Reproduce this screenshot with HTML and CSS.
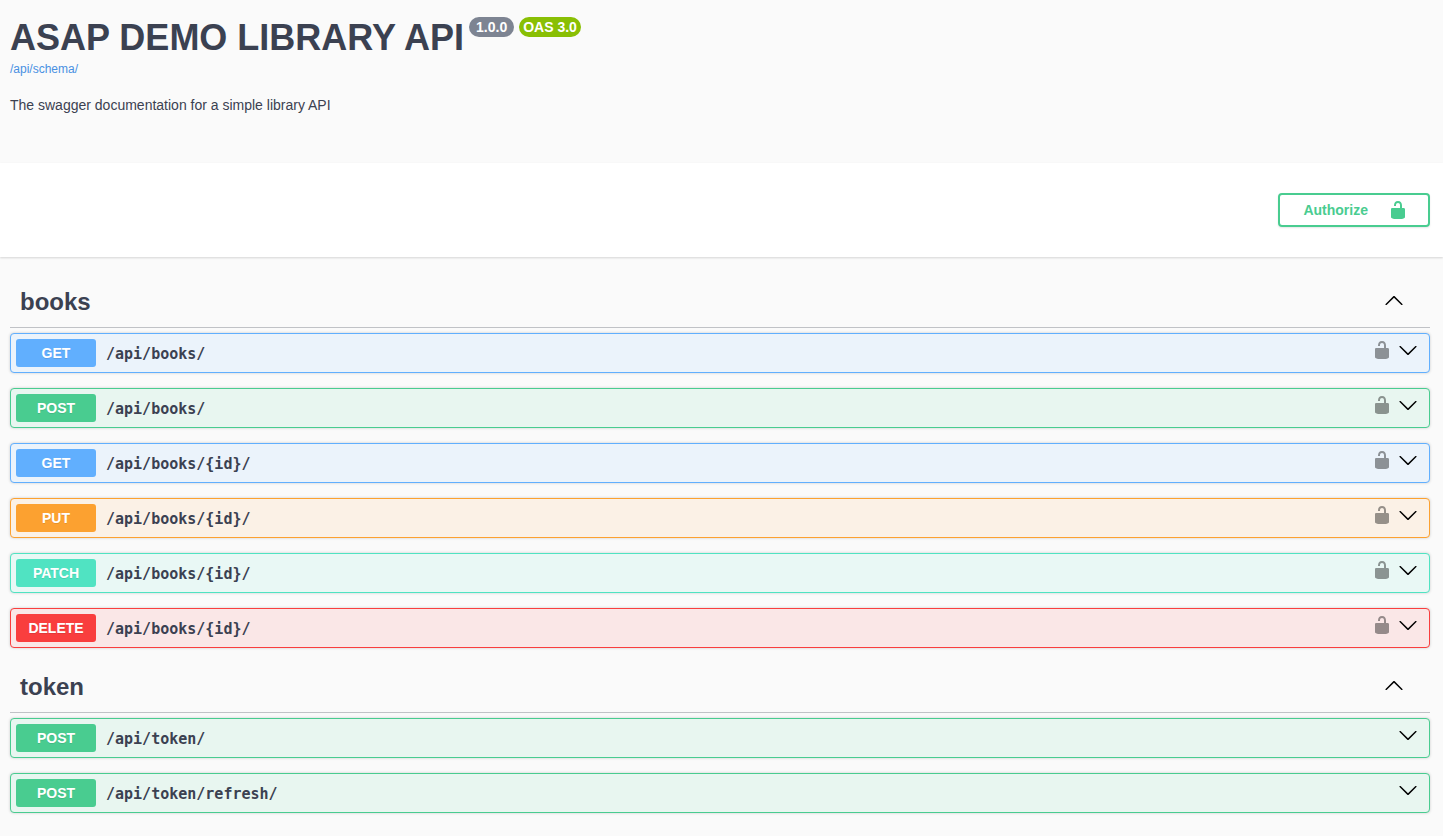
FILE: index.html
```html
<!DOCTYPE html>
<html lang="en">
<head>
<meta charset="utf-8">
<title>ASAP DEMO LIBRARY API</title>
<link rel="stylesheet" href="styles.css">
</head>
<body>
<svg class="sprite" aria-hidden="true">
  <symbol id="unlocked" viewBox="0 0 20 20"><path d="M15.8 8H14V5.6C14 2.703 12.665 1 10 1 7.334 1 6 2.703 6 5.6V6h2v-.801C8 3.754 8.797 3 10 3c1.203 0 2 .754 2 2.199V8H4c-.553 0-1 .646-1 1.199V17c0 .549.428 1.139.951 1.307l1.197.387C5.672 18.861 6.55 19 7.1 19h5.8c.549 0 1.428-.139 1.951-.307l1.196-.387c.524-.167.953-.757.953-1.306V9.199C17 8.646 16.352 8 15.8 8z"/></symbol>
  <symbol id="down" viewBox="0 0 20 20"><path d="M17.418 6.109c.272-.268.709-.268.979 0s.271.701 0 .969l-7.908 7.83c-.27.268-.707.268-.979 0l-7.908-7.83c-.27-.268-.27-.701 0-.969.271-.268.709-.268.979 0L10 13.25l7.418-7.141z"/></symbol>
  <symbol id="up" viewBox="0 0 20 20"><path d="M17.418 14.908c.272.268.709.268.979 0s.271-.701 0-.969l-7.908-7.83c-.27-.268-.707-.268-.979 0l-7.908 7.83c-.27.268-.27.701 0 .969.271.268.709.268.979 0L10 7.767l7.418 7.141z"/></symbol>
</svg>

<header class="info">
  <div class="title-row">
    <h1 class="title">ASAP DEMO LIBRARY API</h1>
    <span class="badge version">1.0.0</span>
    <span class="badge oas">OAS 3.0</span>
  </div>
  <a class="schema-link" href="/api/schema/">/api/schema/</a>
  <p class="description">The swagger documentation for a simple library API</p>
</header>

<section class="auth-bar">
  <button class="authorize" type="button">Authorize<svg class="icon"><use href="#unlocked"/></svg></button>
</section>

<main class="operations">
  <section>
    <div class="tag">
      <h2 class="tag-name">books</h2>
      <button class="icon-button" type="button" aria-label="Collapse books"><svg class="icon"><use href="#up"/></svg></button>
    </div>
    <div class="operation get">
      <span class="method">GET</span><span class="path">/api/books/</span>
      <div class="actions">
        <button class="icon-button lock" type="button" aria-label="Authorization"><svg class="icon"><use href="#unlocked"/></svg></button>
        <button class="icon-button" type="button" aria-label="Expand"><svg class="icon"><use href="#down"/></svg></button>
      </div>
    </div>
    <div class="operation post">
      <span class="method">POST</span><span class="path">/api/books/</span>
      <div class="actions">
        <button class="icon-button lock" type="button" aria-label="Authorization"><svg class="icon"><use href="#unlocked"/></svg></button>
        <button class="icon-button" type="button" aria-label="Expand"><svg class="icon"><use href="#down"/></svg></button>
      </div>
    </div>
    <div class="operation get">
      <span class="method">GET</span><span class="path">/api/books/{id}/</span>
      <div class="actions">
        <button class="icon-button lock" type="button" aria-label="Authorization"><svg class="icon"><use href="#unlocked"/></svg></button>
        <button class="icon-button" type="button" aria-label="Expand"><svg class="icon"><use href="#down"/></svg></button>
      </div>
    </div>
    <div class="operation put">
      <span class="method">PUT</span><span class="path">/api/books/{id}/</span>
      <div class="actions">
        <button class="icon-button lock" type="button" aria-label="Authorization"><svg class="icon"><use href="#unlocked"/></svg></button>
        <button class="icon-button" type="button" aria-label="Expand"><svg class="icon"><use href="#down"/></svg></button>
      </div>
    </div>
    <div class="operation patch">
      <span class="method">PATCH</span><span class="path">/api/books/{id}/</span>
      <div class="actions">
        <button class="icon-button lock" type="button" aria-label="Authorization"><svg class="icon"><use href="#unlocked"/></svg></button>
        <button class="icon-button" type="button" aria-label="Expand"><svg class="icon"><use href="#down"/></svg></button>
      </div>
    </div>
    <div class="operation delete">
      <span class="method">DELETE</span><span class="path">/api/books/{id}/</span>
      <div class="actions">
        <button class="icon-button lock" type="button" aria-label="Authorization"><svg class="icon"><use href="#unlocked"/></svg></button>
        <button class="icon-button" type="button" aria-label="Expand"><svg class="icon"><use href="#down"/></svg></button>
      </div>
    </div>
  </section>
  <section>
    <div class="tag">
      <h2 class="tag-name">token</h2>
      <button class="icon-button" type="button" aria-label="Collapse token"><svg class="icon"><use href="#up"/></svg></button>
    </div>
    <div class="operation post">
      <span class="method">POST</span><span class="path">/api/token/</span>
      <div class="actions">
        <button class="icon-button" type="button" aria-label="Expand"><svg class="icon"><use href="#down"/></svg></button>
      </div>
    </div>
    <div class="operation post">
      <span class="method">POST</span><span class="path">/api/token/refresh/</span>
      <div class="actions">
        <button class="icon-button" type="button" aria-label="Expand"><svg class="icon"><use href="#down"/></svg></button>
      </div>
    </div>
  </section>
</main>
</body>
</html>
```
FILE: styles.css
```css
* {
  box-sizing: border-box;
}

body {
  margin: 0;
  background: #fafafa;
  color: #3b4151;
  font-family: "Liberation Sans", Arial, sans-serif;
  font-size: 14px;
}

.sprite {
  display: none;
}

.icon {
  display: block;
  width: 20px;
  height: 20px;
  fill: currentColor;
}

.icon-button {
  padding: 0;
  border: 0;
  background: none;
  color: #000;
  cursor: pointer;
}

.info {
  padding: 17px 13px 48px 10px;
}

.title-row {
  display: flex;
  align-items: flex-start;
  gap: 5px;
}

.title {
  margin: 0;
  font-size: 36px;
  line-height: 42px;
}

.badge {
  border-radius: 10px;
  color: #fff;
  font-weight: bold;
  line-height: 20px;
}

.version {
  padding: 0 7px;
  background: #7d8492;
}

.oas {
  padding: 0 4px;
  background: #89bf04;
}

.schema-link {
  display: block;
  width: fit-content;
  color: #4990e2;
  font-size: 12px;
  line-height: 20px;
  text-decoration: none;
}

.description {
  margin: 16px 0 0;
  line-height: 20px;
}

.auth-bar {
  display: flex;
  justify-content: flex-end;
  padding: 30px 13px 30px 10px;
  background: #fff;
  box-shadow: 0 1px 2px rgba(0, 0, 0, 0.15);
}

.authorize {
  display: flex;
  align-items: center;
  gap: 20px;
  padding: 5px 20px 5px 23px;
  border: 2px solid #49cc90;
  border-radius: 4px;
  background: transparent;
  box-shadow: 0 1px 2px rgba(0, 0, 0, 0.1);
  color: #49cc90;
  font: bold 14px/20px "Liberation Sans", Arial, sans-serif;
  cursor: pointer;
}

.operations {
  padding: 21px 13px 8px 10px;
}

.tag {
  display: flex;
  align-items: center;
  justify-content: space-between;
  height: 50px;
  margin-bottom: 5px;
  padding: 0 26px 2px 10px;
  border-bottom: 1px solid rgba(59, 65, 81, 0.3);
}

.tag .icon-button {
  padding-bottom: 4px;
}

.tag-name {
  margin: 0;
  font-size: 24px;
  line-height: 28px;
}

.operation {
  display: flex;
  align-items: center;
  gap: 10px;
  margin-bottom: 15px;
  padding: 5px 11px 5px 5px;
  border: 1px solid;
  border-radius: 4px;
  box-shadow: 0 0 3px rgba(0, 0, 0, 0.19);
}

.method {
  width: 80px;
  border-radius: 3px;
  color: #fff;
  font-weight: bold;
  line-height: 28px;
  text-align: center;
  text-shadow: 0 1px 0 rgba(0, 0, 0, 0.1);
}

.path {
  flex: 1;
  padding-top: 2px;
  font: bold 15px/20px "DejaVu Sans Mono", monospace;
}

.actions {
  display: flex;
  gap: 6px;
  padding-bottom: 6px;
}

.lock {
  opacity: 0.4;
}

.get {
  border-color: #61affe;
  background: #ebf3fb;
}

.get .method {
  background: #61affe;
}

.post {
  border-color: #49cc90;
  background: #e8f6f0;
}

.post .method {
  background: #49cc90;
}

.put {
  border-color: #fca130;
  background: #fbf1e6;
}

.put .method {
  background: #fca130;
}

.patch {
  border-color: #50e3c2;
  background: #e9f8f5;
}

.patch .method {
  background: #50e3c2;
}

.delete {
  border-color: #f93e3e;
  background: #fae7e7;
}

.delete .method {
  background: #f93e3e;
}
```
